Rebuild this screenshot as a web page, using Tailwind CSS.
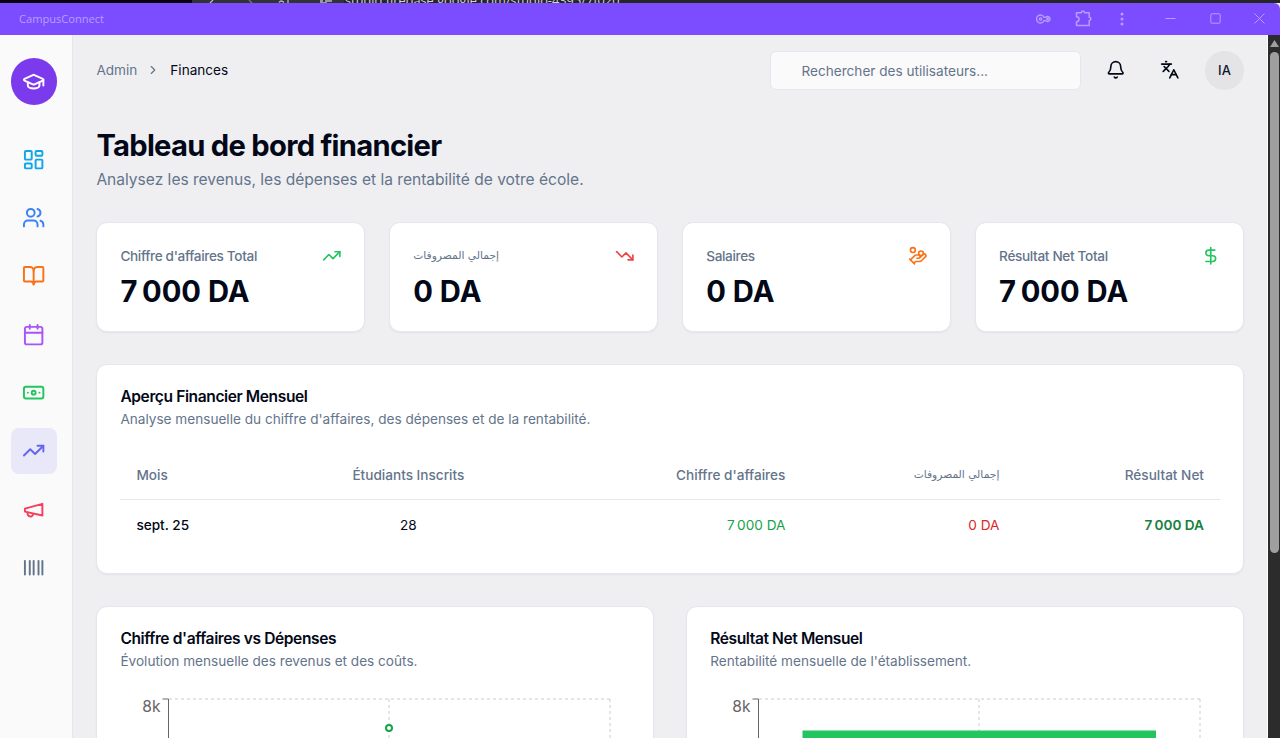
<!DOCTYPE html>
<html lang="fr">
  <head>
    <meta charset="UTF-8" />
    <meta name="viewport" content="width=device-width, initial-scale=1.0" />
    <title>CampusConnect</title>
    <script src="https://cdn.jsdelivr.net/npm/@tailwindcss/browser@4"></script>
  </head>

  <body class="bg-[#efeff2] font-['Inter',sans-serif] text-[#020817]">
    <div id="app" class="flex h-[738px] w-[1280px] flex-col overflow-hidden">
      <!-- ── Strip of the browser window behind ── -->
      <div class="flex h-[3px] shrink-0 overflow-hidden bg-[#262626]">
        <div class="h-[3px] w-48 bg-[#07020f]"></div>
        <svg class="h-[3px] w-[152px] bg-[#333]" viewBox="0 0 152 3" fill="none" stroke="#bbb" stroke-width="1.3">
          <path d="m21 0-3 3" /><path d="m57 0 3 3" stroke="#777" /><path d="M87 2.5q2-3 5 0M96 0v3" /><path d="M128 1h3M133 1h7M128 3h7" />
        </svg>
        <div class="flex h-[3px] items-end whitespace-nowrap pl-px text-[12.8px] leading-[6px] text-[#d0d0d0] font-['Open_Sans',sans-serif]">studio.firebase.google.com/studio-4395/7f020</div>
      </div>

      <!-- ── Title bar ── -->
      <header class="flex h-8 shrink-0 items-center justify-between rounded-tr-md bg-[#7c4dff] pl-[19px] pr-[15px] text-[#b89dff]">
        <span class="text-[11.1px] font-['Open_Sans',sans-serif]">CampusConnect</span>
        <div class="flex items-center pb-px">
          <svg class="mr-[23px] h-[10px] w-4" viewBox="0 0 16 10" fill="none" stroke="currentColor" stroke-width="1.3">
            <path d="M8.2 3.4a4 4 0 1 0 0 3.2h1.5a2.5 2.5 0 1 0 0-3.2z" />
            <circle cx="4.6" cy="5" r="1.2" />
            <circle cx="11.6" cy="5" r=".8" />
          </svg>
          <svg class="mr-[28px] h-[17px] w-[17px]" viewBox="0 0 17 17" fill="none" stroke="currentColor" stroke-width="1.5">
            <path d="M1.5 2.7h4.8a1.6 1.6 0 0 1 3.2 0h4.7v4.5a1.6 1.6 0 0 1 0 3.2v5H1.5v-3.6a2.1 2.1 0 0 0 0-5z" stroke-linejoin="round" />
          </svg>
          <svg class="mr-[41px] h-[14px] w-1" viewBox="0 0 4 14" fill="currentColor">
            <circle cx="2" cy="2" r="1.5" /><circle cx="2" cy="7" r="1.5" /><circle cx="2" cy="12" r="1.5" />
          </svg>
          <svg class="mr-[34px] h-[11px] w-[11px]" viewBox="0 0 11 11" fill="none" stroke="currentColor"><path d="M.5 5.5h10" /></svg>
          <svg class="mr-[33px] h-[11px] w-[11px]" viewBox="0 0 11 11" fill="none" stroke="currentColor"><rect x=".8" y=".8" width="9.4" height="9.4" rx="1" /></svg>
          <svg class="h-[11px] w-[11px]" viewBox="0 0 11 11" fill="none" stroke="currentColor"><path d="m.5.5 10 10M10.5.5l-10 10" /></svg>
        </div>
      </header>

      <div class="flex min-h-0 flex-1">
        <!-- ── Sidebar ── -->
        <aside class="flex w-[73px] shrink-0 flex-col border-r border-[#e2e8f0] bg-[#fafafa] pl-[10.6px] pt-[23px]">
          <div class="mb-[31.2px] flex size-[46.7px] shrink-0 items-center justify-center rounded-full bg-[#7c3aed] text-white">
            <svg class="size-[23.3px]" viewBox="0 0 24 24" fill="none" stroke="currentColor" stroke-width="2" stroke-linecap="round" stroke-linejoin="round">
              <path d="M21.42 10.922a1 1 0 0 0-.019-1.838L12.83 5.18a2 2 0 0 0-1.66 0L2.6 9.08a1 1 0 0 0 0 1.832l8.57 3.908a2 2 0 0 0 1.66 0z" />
              <path d="M22 10v6" />
              <path d="M6 12.5V16a6 3 0 0 0 12 0v-3.5" />
            </svg>
          </div>
          <nav class="flex flex-col gap-[11.65px]">
            <a class="flex size-[46.7px] items-center justify-center rounded-lg text-[#0ea5e9]">
              <svg class="size-[23.3px]" viewBox="0 0 24 24" fill="none" stroke="currentColor" stroke-width="2" stroke-linecap="round" stroke-linejoin="round">
                <rect width="7" height="9" x="3" y="3" rx="1" /><rect width="7" height="5" x="14" y="3" rx="1" /><rect width="7" height="9" x="14" y="12" rx="1" /><rect width="7" height="5" x="3" y="16" rx="1" />
              </svg>
            </a>
            <a class="flex size-[46.7px] items-center justify-center rounded-lg text-[#3b82f6]">
              <svg class="size-[23.3px]" viewBox="0 0 24 24" fill="none" stroke="currentColor" stroke-width="2" stroke-linecap="round" stroke-linejoin="round">
                <path d="M16 21v-2a4 4 0 0 0-4-4H6a4 4 0 0 0-4 4v2" /><circle cx="9" cy="7" r="4" /><path d="M22 21v-2a4 4 0 0 0-3-3.87" /><path d="M16 3.13a4 4 0 0 1 0 7.75" />
              </svg>
            </a>
            <a class="flex size-[46.7px] items-center justify-center rounded-lg text-[#f97316]">
              <svg class="size-[23.3px]" viewBox="0 0 24 24" fill="none" stroke="currentColor" stroke-width="2" stroke-linecap="round" stroke-linejoin="round">
                <path d="M12 7v14" /><path d="M3 18a1 1 0 0 1-1-1V4a1 1 0 0 1 1-1h5a4 4 0 0 1 4 4 4 4 0 0 1 4-4h5a1 1 0 0 1 1 1v13a1 1 0 0 1-1 1h-6a3 3 0 0 0-3 3 3 3 0 0 0-3-3z" />
              </svg>
            </a>
            <a class="flex size-[46.7px] items-center justify-center rounded-lg text-[#a855f7]">
              <svg class="size-[23.3px]" viewBox="0 0 24 24" fill="none" stroke="currentColor" stroke-width="2" stroke-linecap="round" stroke-linejoin="round">
                <path d="M8 2v4" /><path d="M16 2v4" /><rect width="18" height="18" x="3" y="4" rx="2" /><path d="M3 10h18" />
              </svg>
            </a>
            <a class="flex size-[46.7px] items-center justify-center rounded-lg text-[#22c55e]">
              <svg class="size-[23.3px]" viewBox="0 0 24 24" fill="none" stroke="currentColor" stroke-width="2" stroke-linecap="round" stroke-linejoin="round">
                <rect width="20" height="12" x="2" y="6" rx="2" /><circle cx="12" cy="12" r="2" /><path d="M6 12h.01M18 12h.01" />
              </svg>
            </a>
            <a class="flex size-[46.7px] items-center justify-center rounded-lg bg-[#e9e8f9] text-[#6366f1]">
              <svg class="size-[23.3px]" viewBox="0 0 24 24" fill="none" stroke="currentColor" stroke-width="2" stroke-linecap="round" stroke-linejoin="round">
                <path d="m22 7-8.5 8.5-5-5L2 17" /><path d="M16 7h6v6" />
              </svg>
            </a>
            <a class="flex size-[46.7px] items-center justify-center rounded-lg text-[#f43f5e]">
              <svg class="size-[23.3px]" viewBox="0 0 24 24" fill="none" stroke="currentColor" stroke-width="2" stroke-linecap="round" stroke-linejoin="round">
                <path d="m3 11 18-5v12L3 14v-3z" /><path d="M11.6 16.8a3 3 0 1 1-5.8-1.6" />
              </svg>
            </a>
            <a class="flex size-[46.7px] items-center justify-center rounded-lg text-[#64748b]">
              <svg class="size-[23.3px]" viewBox="0 0 24 24" fill="none" stroke="currentColor" stroke-width="2" stroke-linecap="round" stroke-linejoin="round">
                <path d="M3 5v14M8 5v14M12 5v14M17 5v14M21 5v14" />
              </svg>
            </a>
          </nav>
        </aside>

        <main class="min-w-0 flex-1 overflow-hidden pl-[23.4px] pr-[23px] pt-4">
          <!-- ── Breadcrumb, search and user actions ── -->
          <div class="flex h-[38px] items-center">
            <div class="flex items-center text-[13.6px]">
              <span class="text-[#64748b]">Admin</span>
              <svg class="ml-[9px] mr-[10px] size-[14px] text-[#64748b]" viewBox="0 0 24 24" fill="none" stroke="currentColor" stroke-width="2" stroke-linecap="round" stroke-linejoin="round"><path d="m9 18 6-6-6-6" /></svg>
              <span>Finances</span>
            </div>
            <div class="ml-auto flex h-[39px] w-[311px] items-center rounded-md border border-[#e2e8f0] bg-[#fafafa] pl-[31px] pt-[2px] text-[13.6px] text-[#64748b]">Rechercher des utilisateurs...</div>
            <div class="ml-4 flex size-[39px] items-center justify-center">
              <svg class="size-[19.5px]" viewBox="0 0 24 24" fill="none" stroke="currentColor" stroke-width="2" stroke-linecap="round" stroke-linejoin="round">
                <path d="M10.268 21a2 2 0 0 0 3.464 0" /><path d="M3.262 15.326A1 1 0 0 0 4 17h16a1 1 0 0 0 .74-1.673C19.41 13.956 18 12.499 18 8A6 6 0 0 0 6 8c0 4.499-1.411 5.956-2.738 7.326" />
              </svg>
            </div>
            <div class="ml-[15px] flex size-[39px] items-center justify-center">
              <svg class="size-[19.5px]" viewBox="0 0 24 24" fill="none" stroke="currentColor" stroke-width="2" stroke-linecap="round" stroke-linejoin="round">
                <path d="m5 8 6 6" /><path d="m4 14 6-6 2-3" /><path d="M2 5h12" /><path d="M7 2h1" /><path d="m22 22-5-10-5 10" /><path d="M14 18h6" />
              </svg>
            </div>
            <div class="ml-[15.5px] flex size-[39px] items-center justify-center rounded-full bg-[#e4e4e7] pt-px text-[13px] font-medium text-[#0f172a]">IA</div>
          </div>

          <!-- ── Page heading ── -->
          <h1 class="mt-[39px] text-[29.2px] font-bold leading-[35px] tracking-[-0.73px]">Tableau de bord financier</h1>
          <p class="mt-[5px] text-[15.55px] leading-[23px] text-[#64748b]">Analysez les revenus, les dépenses et la rentabilité de votre école.</p>

          <!-- ── Key figures ── -->
          <section class="mt-[31px] grid grid-cols-4 gap-6">
            <div class="h-[110px] rounded-[11px] border border-[#e2e8f0] bg-white px-[23px] pt-[23px] shadow-xs">
              <div class="flex h-5 items-center justify-between">
                <span class="text-[13.6px] font-medium tracking-tight text-[#64748b]">Chiffre d'affaires Total</span>
                <svg class="size-[19.5px] text-[#22c55e]" viewBox="0 0 24 24" fill="none" stroke="currentColor" stroke-width="2" stroke-linecap="round" stroke-linejoin="round"><path d="m22 7-8.5 8.5-5-5L2 17" /><path d="M16 7h6v6" /></svg>
              </div>
              <div class="mt-[8px] text-[29.2px] font-bold leading-[35px]">7&#8239;000 DA</div>
            </div>
            <div class="h-[110px] rounded-[11px] border border-[#e2e8f0] bg-white px-[23px] pt-[23px] shadow-xs">
              <div class="flex h-5 items-center justify-between">
                <span class="text-[10.7px] font-['DejaVu_Sans',sans-serif] text-[#64748b]">إجمالي المصروفات</span>
                <svg class="size-[19.5px] text-[#ef4444]" viewBox="0 0 24 24" fill="none" stroke="currentColor" stroke-width="2" stroke-linecap="round" stroke-linejoin="round"><path d="m22 17-8.5-8.5-5 5L2 7" /><path d="M16 17h6v-6" /></svg>
              </div>
              <div class="mt-[8px] text-[29.2px] font-bold leading-[35px]">0 DA</div>
            </div>
            <div class="h-[110px] rounded-[11px] border border-[#e2e8f0] bg-white px-[23px] pt-[23px] shadow-xs">
              <div class="flex h-5 items-center justify-between">
                <span class="text-[13.6px] font-medium tracking-tight text-[#64748b]">Salaires</span>
                <svg class="size-[19.5px] text-[#f97316]" viewBox="0 0 24 24" fill="none" stroke="currentColor" stroke-width="2" stroke-linecap="round" stroke-linejoin="round">
                  <path d="M11 15h2a2 2 0 1 0 0-4h-3c-.6 0-1.1.2-1.4.6L3 17" /><path d="m7 21 1.6-1.4c.3-.4.8-.6 1.4-.6h4c1.1 0 2.1-.4 2.8-1.2l4.6-4.4a2 2 0 0 0-2.75-2.91l-4.2 3.9" /><path d="m2 16 6 6" /><circle cx="16" cy="9" r="2.9" /><circle cx="6" cy="5" r="3" />
                </svg>
              </div>
              <div class="mt-[8px] text-[29.2px] font-bold leading-[35px]">0 DA</div>
            </div>
            <div class="h-[110px] rounded-[11px] border border-[#e2e8f0] bg-white px-[23px] pt-[23px] shadow-xs">
              <div class="flex h-5 items-center justify-between">
                <span class="text-[13.6px] font-medium tracking-tight text-[#64748b]">Résultat Net Total</span>
                <svg class="size-[19.5px] text-[#22c55e]" viewBox="0 0 24 24" fill="none" stroke="currentColor" stroke-width="2" stroke-linecap="round" stroke-linejoin="round"><path d="M12 2v20" /><path d="M17 5H9.5a3.5 3.5 0 0 0 0 7h5a3.5 3.5 0 0 1 0 7H6" /></svg>
              </div>
              <div class="mt-[8px] text-[29.2px] font-bold leading-[35px]">7&#8239;000 DA</div>
            </div>
          </section>

          <!-- ── Monthly overview table ── -->
          <section class="mt-8 h-[210px] rounded-[11px] border border-[#e2e8f0] bg-white px-[23px] pt-[20px] shadow-xs">
            <h2 class="text-[15.55px] font-semibold leading-6 tracking-[-0.39px]">Aperçu Financier Mensuel</h2>
            <p class="text-[13.6px] leading-5 text-[#64748b]">Analyse mensuelle du chiffre d'affaires, des dépenses et de la rentabilité.</p>
            <table class="mt-[23px] w-full table-fixed text-[13.6px]">
              <thead>
                <tr class="h-[47px] border-b border-[#e2e8f0] text-[#64748b]">
                  <th class="w-[161px] pl-4 text-left font-medium">Mois</th>
                  <th class="w-[254px] text-center font-medium">Étudiants Inscrits</th>
                  <th class="w-[266px] pr-4 text-right font-medium">Chiffre d'affaires</th>
                  <th class="w-[214px] pr-4 text-right text-[10.7px] font-normal font-['DejaVu_Sans',sans-serif]">إجمالي المصروفات</th>
                  <th class="pr-4 text-right font-medium">Résultat Net</th>
                </tr>
              </thead>
              <tbody>
                <tr class="h-[51px]">
                  <td class="pl-4 font-medium">sept. 25</td>
                  <td class="text-center">28</td>
                  <td class="pr-4 text-right text-[#16a34a]">7&#8239;000 DA</td>
                  <td class="pr-4 text-right text-[#dc2626]">0 DA</td>
                  <td class="pr-4 text-right font-semibold text-[#15803d]">7&#8239;000 DA</td>
                </tr>
              </tbody>
            </table>
          </section>

          <!-- ── Charts ── -->
          <section class="mt-8 grid grid-cols-2 gap-8">
            <div class="h-[340px] rounded-[11px] border border-[#e2e8f0] bg-white px-[23px] pt-[20px] shadow-xs">
              <h2 class="text-[15.55px] font-semibold leading-6 tracking-[-0.39px]">Chiffre d'affaires vs Dépenses</h2>
              <p class="text-[13.6px] leading-5 text-[#64748b]">Évolution mensuelle des revenus et des coûts.</p>
              <svg class="mt-[23px] h-[260px] w-[510px]" viewBox="0 0 510 260" fill="none">
                <path d="M49 5h441M269 5V240M490 5V240" stroke="#ccc" stroke-dasharray="3 3" />
                <path d="M42.5 5h6V240" stroke="#666" />
                <text x="40.5" y="18" text-anchor="end" class="text-[15.55px]" fill="#666">8k</text>
                <circle cx="269" cy="34" r="3" fill="#fff" stroke="#16a34a" stroke-width="2" />
              </svg>
            </div>
            <div class="h-[340px] rounded-[11px] border border-[#e2e8f0] bg-white px-[23px] pt-[20px] shadow-xs">
              <h2 class="text-[15.55px] font-semibold leading-6 tracking-[-0.39px]">Résultat Net Mensuel</h2>
              <p class="text-[13.6px] leading-5 text-[#64748b]">Rentabilité mensuelle de l'établissement.</p>
              <svg class="mt-[23px] h-[260px] w-[510px]" viewBox="0 0 510 260" fill="none">
                <path d="M49 5h441M269 5V240M490 5V240" stroke="#ccc" stroke-dasharray="3 3" />
                <path d="M42.5 5h6V240" stroke="#666" />
                <text x="40.5" y="18" text-anchor="end" class="text-[15.55px]" fill="#666">8k</text>
                <rect x="92.5" y="36.5" width="353.5" height="200" fill="#22c55e" />
              </svg>
            </div>
          </section>
        </main>

        <!-- ── Scrollbar ── -->
        <div class="flex w-[13px] shrink-0 flex-col items-center border-l border-white bg-[#2c2c2c] pt-[5px]">
          <svg class="h-[7px] w-[9px]" viewBox="0 0 9 7"><path d="M4.5 0 9 7H0z" fill="#9f9f9f" /></svg>
          <div class="mt-[5px] h-[501px] w-[9px] rounded-full bg-[#9f9f9f]"></div>
        </div>
      </div>
    </div>
  </body>
</html>
